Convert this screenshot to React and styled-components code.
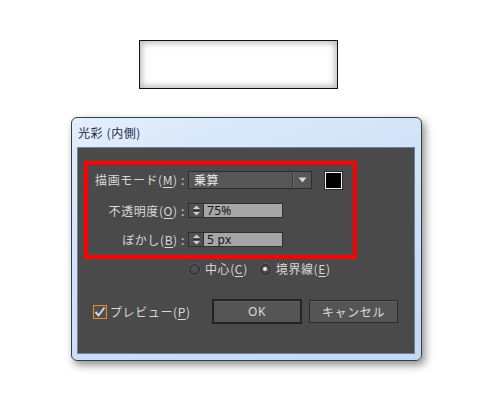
import styled, { createGlobalStyle } from "styled-components";

const GlobalStyle = createGlobalStyle`
  html, body {
    margin: 0;
    padding: 0;
    background: #ffffff;
  }
  body {
    font-family: "Noto Sans CJK JP", "Noto Sans", sans-serif;
    font-size: 12px;
    letter-spacing: 0.6px;
  }
`;

const Page = styled.div({
  width: "500px",
  height: "400px",
  boxSizing: "border-box",
  padding: "40px 0 0 71px",
  overflow: "hidden",
});

const PreviewBox = styled.div({
  width: "199px",
  height: "49px",
  marginLeft: "68px",
  boxSizing: "border-box",
  border: "1px solid #111",
  background: "#fff",
  boxShadow: "inset 0 0 6px 2px rgba(0,0,0,0.28)",
});

const Dialog = styled.div({
  marginTop: "28px",
  width: "351px",
  height: "244px",
  boxSizing: "border-box",
  border: "1px solid #3a3f47",
  borderRadius: "6px",
  background: "linear-gradient(160deg, #e2eefb 0%, #cfe2f7 45%, #c3daf3 100%)",
  boxShadow: "3px 4px 9px rgba(0,0,0,0.45)",
  display: "flex",
  flexDirection: "column",
});

const TitleBar = styled.div({
  height: "28px",
  display: "flex",
  alignItems: "center",
  paddingLeft: "6px",
  color: "#1c2a48",
  fontSize: "12px",
  lineHeight: "14px",
  paddingTop: "1px",
});

const Panel = styled.div({
  flex: 1,
  margin: "0 6px 6px 5px",
  background: "#4a4a4a",
  border: "1px solid #6f8299",
  display: "flex",
  flexDirection: "column",
  color: "#d8d8d8",
});

const Highlight = styled.div({
  margin: "13px 0 0 6px",
  width: "273px",
  height: "98px",
  boxSizing: "border-box",
  border: "4px solid #ff0000",
  padding: "6px 0 0 0",
  display: "grid",
  gridTemplateColumns: "97px auto",
  columnGap: "3px",
  rowGap: "14px",
  alignItems: "center",
  gridAutoRows: "min-content",
});

const Label = styled.div({
  textAlign: "right",
  whiteSpace: "nowrap",
  lineHeight: "14px",
  height: ({ $h }) => $h,
  display: "flex",
  alignItems: "center",
  justifyContent: "flex-end",
});

const Key = styled.span({
  textDecoration: "underline",
  textUnderlineOffset: "2px",
});

const ControlRow = styled.div({
  display: "flex",
  alignItems: "center",
});

const Select = styled.div({
  width: "124px",
  height: "18px",
  boxSizing: "border-box",
  border: "1px solid #2e2e2e",
  background: "#565656",
  display: "flex",
  alignItems: "center",
  color: "#ececec",
  lineHeight: "14px",
});

const SelectText = styled.span({
  flex: 1,
  paddingLeft: "5px",
});

const SelectArrow = styled.div({
  width: "18px",
  height: "14px",
  borderLeft: "1px solid #3a3a3a",
  boxShadow: "inset 1px 0 0 #6a6a6a",
  display: "flex",
  alignItems: "center",
  justifyContent: "center",
});

const Swatch = styled.div({
  marginLeft: "13px",
  width: "17px",
  height: "17px",
  boxSizing: "border-box",
  border: "1px solid #f4f4f4",
  outline: "1px solid #2a2a2a",
  background: "#000",
});

const Stepper = styled.div({
  width: "15px",
  height: "15px",
  boxSizing: "border-box",
  border: "1px solid #2e2e2e",
  borderRight: "none",
  background: "#505050",
  display: "flex",
  alignItems: "center",
  justifyContent: "center",
});

const Field = styled.div({
  width: "80px",
  height: "15px",
  boxSizing: "border-box",
  border: "1px solid #2e2e2e",
  background: "#a6a6a6",
  color: "#151515",
  fontFamily: "\"Noto Sans\", \"Liberation Sans\", sans-serif",
  fontSize: "12px",
  letterSpacing: "0.3px",
  lineHeight: "13px",
  paddingLeft: "3px",
});

const RadioRow = styled.div({
  marginTop: "3px",
  paddingLeft: "111px",
  display: "flex",
  alignItems: "center",
  height: "14px",
});

const RadioItem = styled.div({
  display: "flex",
  alignItems: "center",
  gap: "5px",
  marginRight: ({ $gap }) => $gap || "0",
  lineHeight: "14px",
});

const RadioDot = styled.span({
  width: "11px",
  height: "11px",
  boxSizing: "border-box",
  borderRadius: "50%",
  border: "1px solid #2c2c2c",
  background: "radial-gradient(circle at 50% 40%, #555 0%, #3c3c3c 100%)",
  boxShadow: "0 0 0 1px #5c5c5c",
  display: "flex",
  alignItems: "center",
  justifyContent: "center",
  "&::after": {
    content: "''",
    width: "4px",
    height: "4px",
    borderRadius: "50%",
    background: ({ $checked }) => ($checked ? "#e8e8e8" : "transparent"),
  },
});

const BottomRow = styled.div({
  marginTop: "23px",
  display: "flex",
  alignItems: "center",
  padding: "0 16px 0 15px",
});

const CheckGroup = styled.div({
  flex: 1,
  display: "flex",
  alignItems: "center",
  gap: "3px",
  lineHeight: "14px",
});

const CheckBox = styled.span({
  width: "14px",
  height: "14px",
  boxSizing: "border-box",
  border: "1px solid #f08a24",
  background: "#4f4f4f",
  display: "flex",
  alignItems: "center",
  justifyContent: "center",
});

const Button = styled.div({
  width: ({ $w }) => $w,
  height: ({ $primary }) => ($primary ? "25px" : "23px"),
  boxSizing: "border-box",
  border: ({ $primary }) => ($primary ? "2px solid #232323" : "1px solid #2a2a2a"),
  background: "#555555",
  boxShadow: "inset 0 1px 0 #606060",
  color: "#dcdcdc",
  display: "flex",
  alignItems: "center",
  justifyContent: "center",
  lineHeight: "14px",
  marginLeft: ({ $ml }) => $ml || "0",
});

const ButtonLabel = styled.span({
  fontFamily: ({ $latin }) =>
    $latin ? "\"Noto Sans\", \"Liberation Sans\", sans-serif" : "inherit",
});

const StepperIcon = () => (
  <svg width="9" height="13" viewBox="0 0 9 13">
    <path d="M4.5 1.5 L8 5 L1 5 Z" fill="#cfcfcf" />
    <line x1="1" y1="6.5" x2="8" y2="6.5" stroke="#2e2e2e" strokeWidth="1" />
    <path d="M1 8 L8 8 L4.5 11.5 Z" fill="#cfcfcf" />
  </svg>
);

const App = () => {
  return (
    <>
      <GlobalStyle />
      <Page>
        <PreviewBox />
        <Dialog>
          <TitleBar>光彩 (内側)</TitleBar>
          <Panel>
            <Highlight>
              <Label $h="18px">
                描画モード(<Key>M</Key>) :
              </Label>
              <ControlRow>
                <Select>
                  <SelectText>乗算</SelectText>
                  <SelectArrow>
                    <svg width="9" height="6" viewBox="0 0 9 6">
                      <path d="M0.5 0.5 L8.5 0.5 L4.5 5.5 Z" fill="#d9d9d9" />
                    </svg>
                  </SelectArrow>
                </Select>
                <Swatch />
              </ControlRow>

              <Label $h="15px">
                不透明度(<Key>O</Key>) :
              </Label>
              <ControlRow>
                <Stepper>
                  <StepperIcon />
                </Stepper>
                <Field>75%</Field>
              </ControlRow>

              <Label $h="15px">
                ぼかし(<Key>B</Key>) :
              </Label>
              <ControlRow>
                <Stepper>
                  <StepperIcon />
                </Stepper>
                <Field>5 px</Field>
              </ControlRow>
            </Highlight>

            <RadioRow>
              <RadioItem $gap="12px">
                <RadioDot />
                <span>
                  中心(<Key>C</Key>)
                </span>
              </RadioItem>
              <RadioItem>
                <RadioDot $checked />
                <span>
                  境界線(<Key>E</Key>)
                </span>
              </RadioItem>
            </RadioRow>

            <BottomRow>
              <CheckGroup>
                <CheckBox>
                  <svg width="12" height="12" viewBox="0 0 12 12">
                    <path
                      d="M1.5 6 L4.5 9.5 L10.5 1.5"
                      fill="none"
                      stroke="#d6d6d6"
                      strokeWidth="2"
                    />
                  </svg>
                </CheckBox>
                <span>
                  プレビュー(<Key>P</Key>)
                </span>
              </CheckGroup>
              <Button $primary $w="90px">
                <ButtonLabel $latin>OK</ButtonLabel>
              </Button>
              <Button $w="89px" $ml="7px">
                <ButtonLabel>キャンセル</ButtonLabel>
              </Button>
            </BottomRow>
          </Panel>
        </Dialog>
      </Page>
    </>
  );
};

export default App;
